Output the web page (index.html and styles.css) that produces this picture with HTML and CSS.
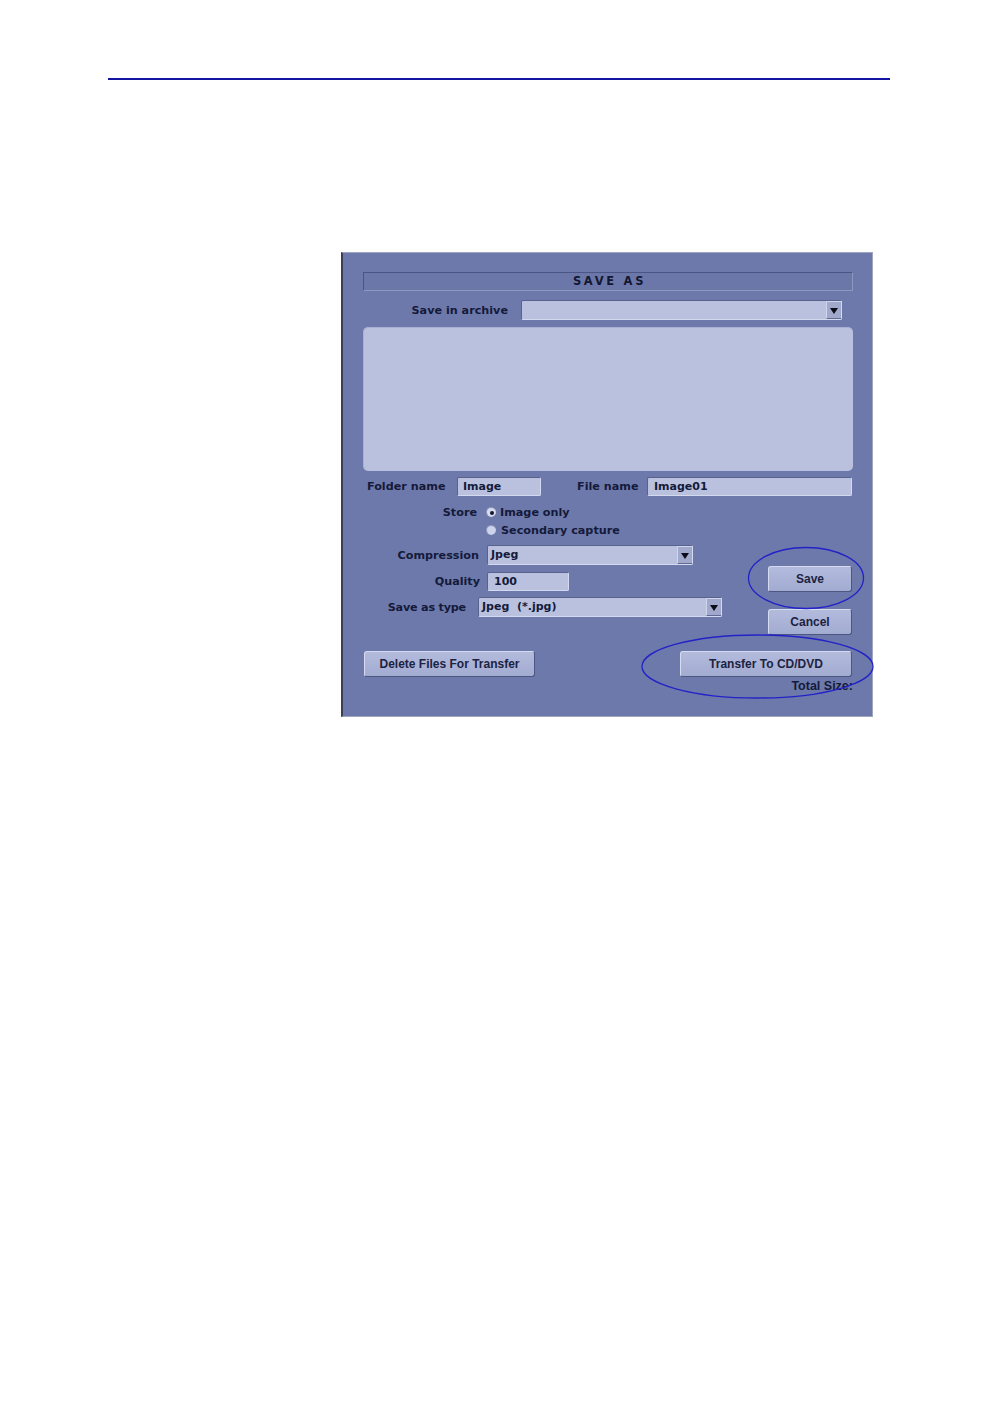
FILE: index.html
```html
<!DOCTYPE html>
<html lang="en">
<head>
<meta charset="utf-8">
<title>Save As</title>
<link rel="stylesheet" href="styles.css">
</head>
<body>
<div class="page">
  <div class="rule"></div>
  <div class="dialog">
    <div class="titlebar">SAVE AS</div>

    <div class="row archive-row">
      <span class="label archive-label">Save in archive</span>
      <div class="select archive-select"><span class="select-text"></span><span class="arrow"></span></div>
    </div>

    <div class="listbox"></div>

    <div class="row name-row">
      <span class="label folder-label">Folder name</span>
      <div class="field folder-field">Image</div>
      <span class="label file-label">File name</span>
      <div class="field file-field">Image01</div>
    </div>

    <div class="middle">
      <div class="form">
        <div class="row store-row">
          <span class="label store-label">Store</span>
          <span class="radio checked"></span>
          <span class="label radio-text">Image only</span>
        </div>
        <div class="row store-row2">
          <span class="radio"></span>
          <span class="label radio-text2">Secondary capture</span>
        </div>
        <div class="row comp-row">
          <span class="label comp-label">Compression</span>
          <div class="select comp-select"><span class="select-text">Jpeg</span><span class="arrow"></span></div>
        </div>
        <div class="row quality-row">
          <span class="label quality-label">Quality</span>
          <div class="field quality-field">100</div>
        </div>
        <div class="row type-row">
          <span class="label type-label">Save as type</span>
          <div class="select type-select"><span class="select-text">Jpeg&nbsp; (*.jpg)</span><span class="arrow"></span></div>
        </div>
      </div>
      <div class="side-buttons">
        <button class="btn">Save</button>
        <button class="btn">Cancel</button>
      </div>
    </div>

    <div class="bottom-row">
      <button class="btn delete-btn">Delete Files For Transfer</button>
      <button class="btn transfer-btn">Transfer To CD/DVD</button>
    </div>
    <div class="total">Total Size:</div>

    <svg class="oval oval-save" width="118" height="64" viewBox="0 0 118 64"><ellipse cx="59" cy="32" rx="57.5" ry="30.5" fill="none" stroke="#2222c8" stroke-width="1.3"/></svg>
    <svg class="oval oval-transfer" width="233" height="65" viewBox="0 0 233 65"><ellipse cx="116.5" cy="32.5" rx="115.5" ry="31.5" fill="none" stroke="#2222c8" stroke-width="1.3"/></svg>
  </div>
</div>
</body>
</html>
```

FILE: styles.css
```css
* { box-sizing: border-box; }

html, body {
  margin: 0;
  padding: 0;
  background: #ffffff;
}

body {
  font-family: "DejaVu Sans", Verdana, sans-serif;
}

.page {
  padding-top: 78px;
  margin-left: 108px;
  width: 782px;
}

.rule {
  height: 2px;
  background: #1414a2;
}

.dialog {
  position: relative;
  margin-top: 172px;
  margin-left: 233px;
  width: 532px;
  height: 465px;
  background: #6d79aa;
  border: 1px solid #a0a6c0;
  border-left: 2px solid #3a3f58;
  padding: 19px 19px 0 20px;
}

.titlebar {
  height: 19px;
  border-top: 1px solid #4a5586;
  border-left: 1px solid #4a5586;
  border-bottom: 1px solid #8d97c0;
  border-right: 1px solid #8d97c0;
  background: #6c77a9;
  text-align: center;
  font-weight: bold;
  font-size: 11.5px;
  line-height: 17px;
  letter-spacing: 2.7px;
  color: #121733;
  padding-left: 3px;
}

.row {
  display: flex;
  align-items: center;
}

.label {
  font-weight: bold;
  font-size: 11.2px;
  color: #141a3a;
  white-space: nowrap;
}

.field, .select {
  height: 19px;
  background: #b9c1de;
  border-top: 1px solid #58628f;
  border-left: 1px solid #58628f;
  border-bottom: 1px solid #d3d9ee;
  border-right: 1px solid #d3d9ee;
  border-radius: 2px;
  font-weight: bold;
  font-size: 11px;
  line-height: 17px;
  color: #141a3a;
  padding-left: 5px;
  white-space: nowrap;
}

.select {
  display: flex;
  height: 20px;
  padding-left: 3px;
  padding-right: 0;
}

.select-text {
  flex: 1;
}

.arrow {
  width: 15px;
  height: 18px;
  background: #a0a9cb;
  border-left: 1px solid #cfd5ea;
  border-top: 1px solid #cfd5ea;
  border-bottom: 1px solid #606a95;
  display: flex;
  align-items: center;
  justify-content: center;
}

.arrow::after {
  content: "";
  width: 0;
  height: 0;
  border-left: 4.5px solid transparent;
  border-right: 4.5px solid transparent;
  border-top: 6px solid #0a0c18;
  margin-top: 1px;
}

/* archive row */
.archive-row {
  margin-top: 9px;
  height: 20px;
}
.archive-label {
  width: 145px;
  text-align: right;
}
.archive-select {
  margin-left: 13px;
  width: 321px;
}

.listbox {
  margin-top: 7px;
  height: 144px;
  background: #b9c1de;
  border-radius: 5px;
  border-top: 1px solid #a7b0d2;
  border-left: 1px solid #a7b0d2;
}

/* name row */
.name-row {
  margin-top: 6px;
  height: 19px;
}
.folder-label {
  width: 94px;
  padding-left: 4px;
}
.folder-field { width: 84px; }
.file-label {
  margin-left: 36px;
  width: 70px;
}
.file-field { width: 205px; padding-left: 6px; }

/* middle */
.middle {
  display: flex;
  align-items: flex-start;
  margin-top: 7px;
}

.form {
  display: flex;
  flex-direction: column;
}

.store-row, .store-row2 { height: 18px; }
.store-label {
  width: 114px;
  text-align: right;
  margin-right: 9px;
}
.store-row2 { padding-left: 123px; }

.radio {
  width: 10px;
  height: 10px;
  border-radius: 50%;
  background: #cdd3ea;
  border-top: 1px solid #8d96bc;
  border-left: 1px solid #8d96bc;
  display: flex;
  align-items: center;
  justify-content: center;
  flex: none;
}
.radio.checked {
  background: #d6dbef;
}
.radio.checked::after {
  content: "";
  width: 4px;
  height: 4px;
  border-radius: 50%;
  background: #14182e;
}
.radio-text { margin-left: 4px; }
.radio-text2 { margin-left: 5px; }

.comp-row { margin-top: 6px; height: 20px; }
.comp-label { width: 116px; text-align: right; margin-right: 8px; }
.comp-select { width: 206px; }

.quality-row { margin-top: 7px; height: 19px; }
.quality-label { width: 117px; text-align: right; margin-right: 7px; }
.quality-field { width: 82px; padding-left: 6px; }

.type-row { margin-top: 6px; height: 20px; }
.type-label { width: 103px; text-align: right; margin-right: 12px; letter-spacing: -0.2px; }
.type-select { width: 244px; padding-left: 3px; }

.side-buttons {
  margin-left: auto;
  margin-right: 1px;
  padding-top: 63px;
  width: 84px;
  display: flex;
  flex-direction: column;
  gap: 17px;
}

.btn {
  display: block;
  height: 26px;
  padding: 0;
  margin: 0;
  background: linear-gradient(#b3bbdd, #a2abd1);
  border-top: 1px solid #d5dbf0;
  border-left: 1px solid #d5dbf0;
  border-bottom: 1px solid #4c5680;
  border-right: 1px solid #4c5680;
  border-radius: 3px;
  font-family: "Liberation Sans", Arial, sans-serif;
  font-weight: bold;
  font-size: 12px;
  color: #1c2342;
  text-align: center;
  width: 100%;
}

.bottom-row {
  margin-top: 16px;
  display: flex;
  justify-content: space-between;
  padding: 0 1px;
}
.delete-btn { width: 171px; }
.transfer-btn { width: 172px; }

.total {
  margin-top: 2px;
  text-align: right;
  font-family: "Liberation Sans", Arial, sans-serif;
  font-weight: bold;
  font-size: 12.5px;
  line-height: 14px;
  color: #141a3a;
}

.oval {
  position: absolute;
  display: block;
}
.oval-save {
  left: 404px;
  top: 293px;
}
.oval-transfer {
  left: 298px;
  top: 381px;
}
```
